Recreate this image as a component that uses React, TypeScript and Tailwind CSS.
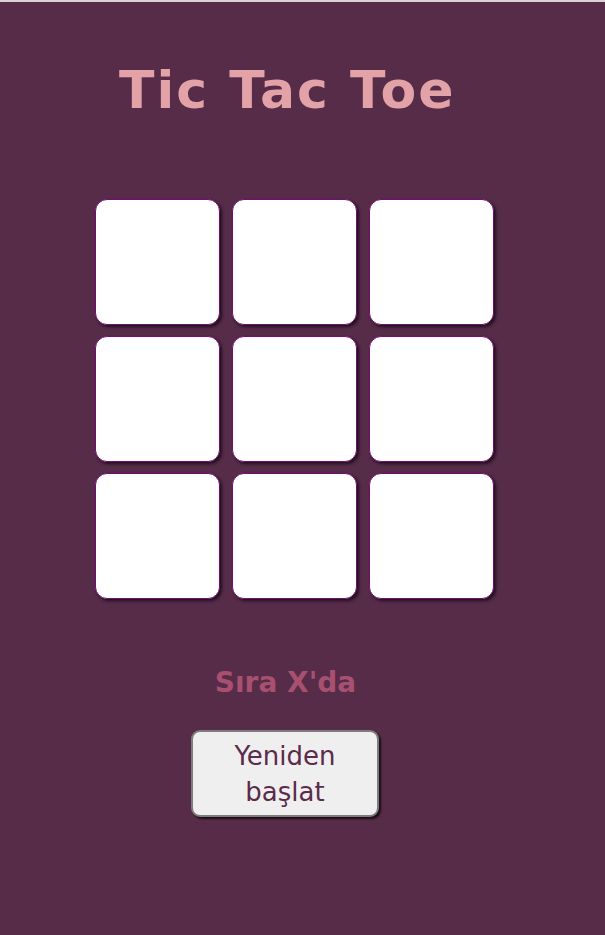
import React, { useState } from 'react';

const font = { fontFamily: '"Comic Sans MS", "DejaVu Sans", sans-serif' };

export default function App() {
  const [cells, setCells] = useState<(string | null)[]>(Array(9).fill(null));
  const [turn, setTurn] = useState<'X' | 'O'>('X');

  const play = (i: number) => {
    if (cells[i]) return;
    const next = [...cells];
    next[i] = turn;
    setCells(next);
    setTurn(turn === 'X' ? 'O' : 'X');
  };

  const reset = () => {
    setCells(Array(9).fill(null));
    setTurn('X');
  };

  return (
    <div className="min-h-[935px] w-[605px] bg-[#562c48] border-t-2 border-[#d8d4d6]" style={font}>
      {/* Title */}
      <h1 className="pt-[48px] pl-[119px] text-[52px] leading-[80px] font-bold text-[#e3a2a8] tracking-[2px]">
        Tic Tac Toe
      </h1>

      {/* Board */}
      <div className="mt-[69px] ml-[95px] grid w-[401px] grid-cols-[125px_125px_125px] grid-rows-[126px_126px_126px] gap-x-[12px] gap-y-[11px]">
        {cells.map((c, i) => (
          <button
            key={i}
            onClick={() => play(i)}
            className="rounded-[12px] border border-[#7a0a78] bg-white text-[64px] font-bold text-[#562c48] shadow-[2px_2px_3px_rgba(20,10,20,0.8)]"
          >
            {c}
          </button>
        ))}
      </div>

      {/* Status */}
      <div className="ml-[-34px] mt-[64px] text-center text-[28px] font-bold leading-[40px] text-[#a8506f]">
        Sıra {turn}'da
      </div>

      <div className="mt-[27px] flex">
        <button
          onClick={reset}
          className="ml-[191px] h-[87px] w-[188px] rounded-[9px] border-2 border-[#7d7d7d] bg-[#efefef] text-[26px] leading-[36px] text-[#5b2b4a] shadow-[2px_2px_2px_rgba(0,0,0,0.7)]"
        >
          Yeniden
          <br />
          başlat
        </button>
      </div>
    </div>
  );
}
